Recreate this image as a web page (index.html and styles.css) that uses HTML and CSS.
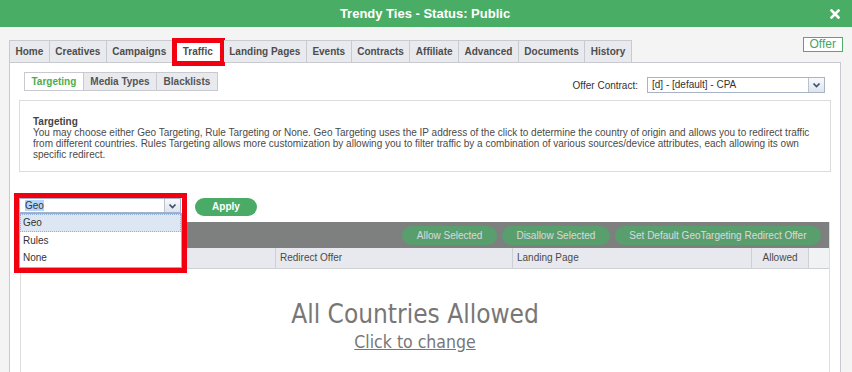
FILE: index.html
```html
<!DOCTYPE html>
<html>
<head>
<meta charset="UTF-8">
<title>Trendy Ties - Status: Public</title>
<link rel="stylesheet" href="styles.css">
</head>
<body>
<div class="titlebar">
	<span></span>
	<span class="title">Trendy Ties - Status: Public</span>
	<span class="close">
		<svg width="10" height="10" viewBox="0 0 10 10"><path d="M1.5 1.5L8.5 8.5M8.5 1.5L1.5 8.5" stroke="#fff" stroke-width="2.6" stroke-linecap="square"/></svg>
	</span>
</div>
<div class="page">
	<div class="tabrow">
		<ul class="tabs">
			<li>Home</li>
			<li>Creatives</li>
			<li>Campaigns</li>
			<li class="active mark">Traffic</li>
			<li>Landing Pages</li>
			<li>Events</li>
			<li>Contracts</li>
			<li>Affiliate</li>
			<li>Advanced</li>
			<li>Documents</li>
			<li>History</li>
		</ul>
		<span class="offer_tag">Offer</span>
	</div>
	<div class="panel">
		<div class="subbar">
			<ul class="subtabs">
				<li class="active">Targeting</li>
				<li>Media Types</li>
				<li>Blacklists</li>
			</ul>
			<div class="contract">
				<span class="contract_label">Offer Contract:</span>
				<div class="select contract_select">
					<span class="select_text">[d] - [default] - CPA</span>
					<span class="select_btn"><svg width="9" height="6" viewBox="0 0 9 6"><path d="M1.5 1.5L4.5 4.5L7.5 1.5" fill="none" stroke="#3c4e6c" stroke-width="1.7"/></svg></span>
				</div>
			</div>
		</div>

		<div class="info">
			<b>Targeting</b><br>
			You may choose either Geo Targeting, Rule Targeting or None. Geo Targeting uses the IP address of the click to determine the country of origin and allows you to redirect traffic<br>
			from different countries. Rules Targeting allows more customization by allowing you to filter traffic by a combination of various sources/device attributes, each allowing its own<br>
			specific redirect.
		</div>

		<div class="controls">
			<div class="geo">
				<div class="select geo_select">
					<span class="select_text"><span class="picked">Geo</span></span>
					<span class="select_btn"><svg width="9" height="6" viewBox="0 0 9 6"><path d="M1.5 1.5L4.5 4.5L7.5 1.5" fill="none" stroke="#3c4e6c" stroke-width="1.7"/></svg></span>
				</div>
				<ul class="geo_list">
					<li class="current">Geo</li>
					<li>Rules</li>
					<li>None</li>
				</ul>
			</div>
			<span class="btn_apply">Apply</span>
		</div>

		<div class="grid">
			<div class="grid_bar">
				<span class="bar_btn">Allow Selected</span>
				<span class="bar_btn">Disallow Selected</span>
				<span class="bar_btn">Set Default GeoTargeting Redirect Offer</span>
			</div>
			<div class="grid_head">
				<div class="col col_country"></div>
				<div class="col col_redirect">Redirect Offer</div>
				<div class="col col_landing">Landing Page</div>
				<div class="col col_allowed">Allowed</div>
				<div class="col_gutter"></div>
			</div>
			<div class="grid_body">
				<div class="empty_title">All Countries Allowed</div>
				<a class="empty_link" href="#">Click to change</a>
			</div>
		</div>
	</div>
</div>
</body>
</html>
```

FILE: styles.css
```css
body {
	margin: 0;
	background-color: #f4f4f4;
	font-family: "Liberation Sans", Arial, sans-serif;
	font-size: 10px;
	color: #4a4a4a;
	overflow: hidden;
}
ul {
	list-style: none;
	margin: 0;
	padding: 0;
}

/* title bar */
.titlebar {
	display: grid;
	grid-template-columns: 1fr auto 1fr;
	align-items: center;
	height: 27px;
	padding: 0 12px 0 10px;
	background-color: #4aad66;
	color: #fff;
	font-size: 13px;
	font-weight: bold;
}
.close {
	justify-self: end;
	display: flex;
}

/* main tabs */
.page {
	padding: 10px 9px 0;
}
.tabrow {
	display: flex;
	justify-content: space-between;
	align-items: flex-start;
}
.tabs {
	display: flex;
	align-items: flex-start;
	margin: 3px 0 -1px;
	position: relative;
	z-index: 1;
}
.tabs li {
	position: relative;
	height: 21px;
	line-height: 21px;
	padding: 0 5.5px;
	background-color: #e9eaee;
	border-top: 1px solid #c9cacf;
	border-right: 1px solid #c9cacf;
	font-weight: bold;
	color: #4d4d4d;
}
.tabs li:first-child {
	border-left: 1px solid #c9cacf;
}
.tabs li.active {
	height: 22px;
	padding: 0 10px;
	background-color: #fff;
}
.mark::after {
	content: "";
	position: absolute;
	top: -3px;
	left: -1px;
	right: -2px;
	bottom: -3px;
	border: 5px solid #f2000f;
}
.offer_tag {
	height: 13px;
	line-height: 13px;
	padding: 0 6px;
	border: 1px solid #4cae67;
	background-color: #fff;
	color: #49a462;
	font-size: 12px;
}

/* panel */
.panel {
	margin-right: 2px;
	min-height: 320px;
	padding: 9px 9px 0;
	background-color: #fff;
	border: 1px solid #c9cacf;
}
.subbar {
	display: flex;
	justify-content: space-between;
	align-items: flex-start;
}
.subtabs {
	display: flex;
	margin-left: 5px;
}
.subtabs li {
	height: 17px;
	line-height: 17px;
	padding: 0 6.5px;
	background-color: #e9eaee;
	border: 1px solid #c9cacf;
	border-left: 0;
	font-weight: bold;
	color: #555;
}
.subtabs li:first-child {
	border-left: 1px solid #c9cacf;
}
.subtabs li.active {
	background-color: #fff;
	color: #4cae50;
}
.contract {
	display: flex;
	align-items: center;
	margin: 5px 6px 0 0;
}
.contract_label {
	margin-right: 9px;
	color: #333;
}

/* fake selects */
.select {
	display: flex;
	box-sizing: border-box;
	background-color: #fff;
	border: 1px solid #a9b3c6;
	color: #333;
}
.select_text {
	flex: 1;
	padding-left: 4px;
	white-space: nowrap;
}
.select_btn {
	display: flex;
	align-items: center;
	justify-content: center;
	width: 15px;
	border-left: 1px solid #b9c2d0;
	background: linear-gradient(#f7f9fc, #dde4ee);
}
.contract_select {
	width: 178px;
	height: 16px;
	line-height: 14px;
}

/* info box */
.info {
	margin-top: 7px;
	padding: 15px 14px 11px 13px;
	border: 1px solid #dcdcdc;
	line-height: 11px;
	white-space: nowrap;
}
.info b {
	color: #444;
}

/* geo select + apply */
.controls {
	display: flex;
	align-items: flex-start;
	margin: 26px 0 6px;
}
.geo {
	position: relative;
	z-index: 5;
	width: 162px;
}
.geo_select {
	height: 15px;
	line-height: 13px;
	border-color: #a3b1cb;
}
.geo_select .select_text {
	padding-left: 5px;
}
.picked {
	background-color: #b5d5fb;
}
.geo_list {
	position: absolute;
	top: 15px;
	left: 0;
	width: 163px;
	box-sizing: border-box;
	background-color: #fff;
	border: 1px solid #8eb0dc;
	color: #333;
}
.geo_list li {
	height: 18px;
	line-height: 18px;
	padding-left: 3px;
}
.geo_list li:last-child {
	height: 17px;
	line-height: 16px;
}
.geo_list li.current {
	background-color: #dde7f4;
	outline: 1px dotted #8fb1de;
	outline-offset: -1px;
}
.geo::after {
	content: "";
	position: absolute;
	top: -5px;
	left: -5px;
	width: 173px;
	height: 80px;
	box-sizing: border-box;
	border: 5px solid #f2000f;
}
.btn_apply {
	width: 62px;
	height: 18px;
	line-height: 18px;
	margin-left: 14px;
	border-radius: 9px;
	background-color: #4aab66;
	color: #fff;
	font-weight: bold;
	text-align: center;
}

/* grid */
.grid {
	margin: 0 1px;
	border-left: 1px solid #dedede;
	border-right: 1px solid #dedede;
}
.grid_bar {
	display: flex;
	justify-content: flex-end;
	align-items: center;
	gap: 5px;
	height: 26px;
	padding-right: 8px;
	background-color: #7e807f;
}
.bar_btn {
	height: 19px;
	line-height: 19px;
	padding: 0 14.5px;
	border-radius: 10px;
	background-color: #4aab66;
	color: #fff;
	opacity: 0.7;
}
.grid_head {
	display: flex;
	height: 20px;
	line-height: 20px;
	background-color: #e8e9ee;
	border-bottom: 1px solid #cfd0d5;
}
.col {
	box-sizing: border-box;
	padding-left: 4px;
	border-right: 1px solid #cfd0d5;
}
.col_country {
	width: 255px;
}
.col_redirect {
	width: 237px;
}
.col_landing {
	width: 239px;
}
.col_allowed {
	width: 57px;
	padding: 0;
	text-align: center;
}
.col_gutter {
	flex: 1;
	background-color: #f1f2f4;
}
.grid_body {
	height: 200px;
	padding: 30px 20px 0 0;
	text-align: center;
	font-family: "DejaVu Sans Condensed", "DejaVu Sans", sans-serif;
	color: #777;
}
.empty_title {
	font-size: 26px;
	line-height: 30px;
}
.empty_link {
	display: inline-block;
	margin-top: 3px;
	font-size: 17.5px;
	line-height: 20px;
	color: #777;
}
```
